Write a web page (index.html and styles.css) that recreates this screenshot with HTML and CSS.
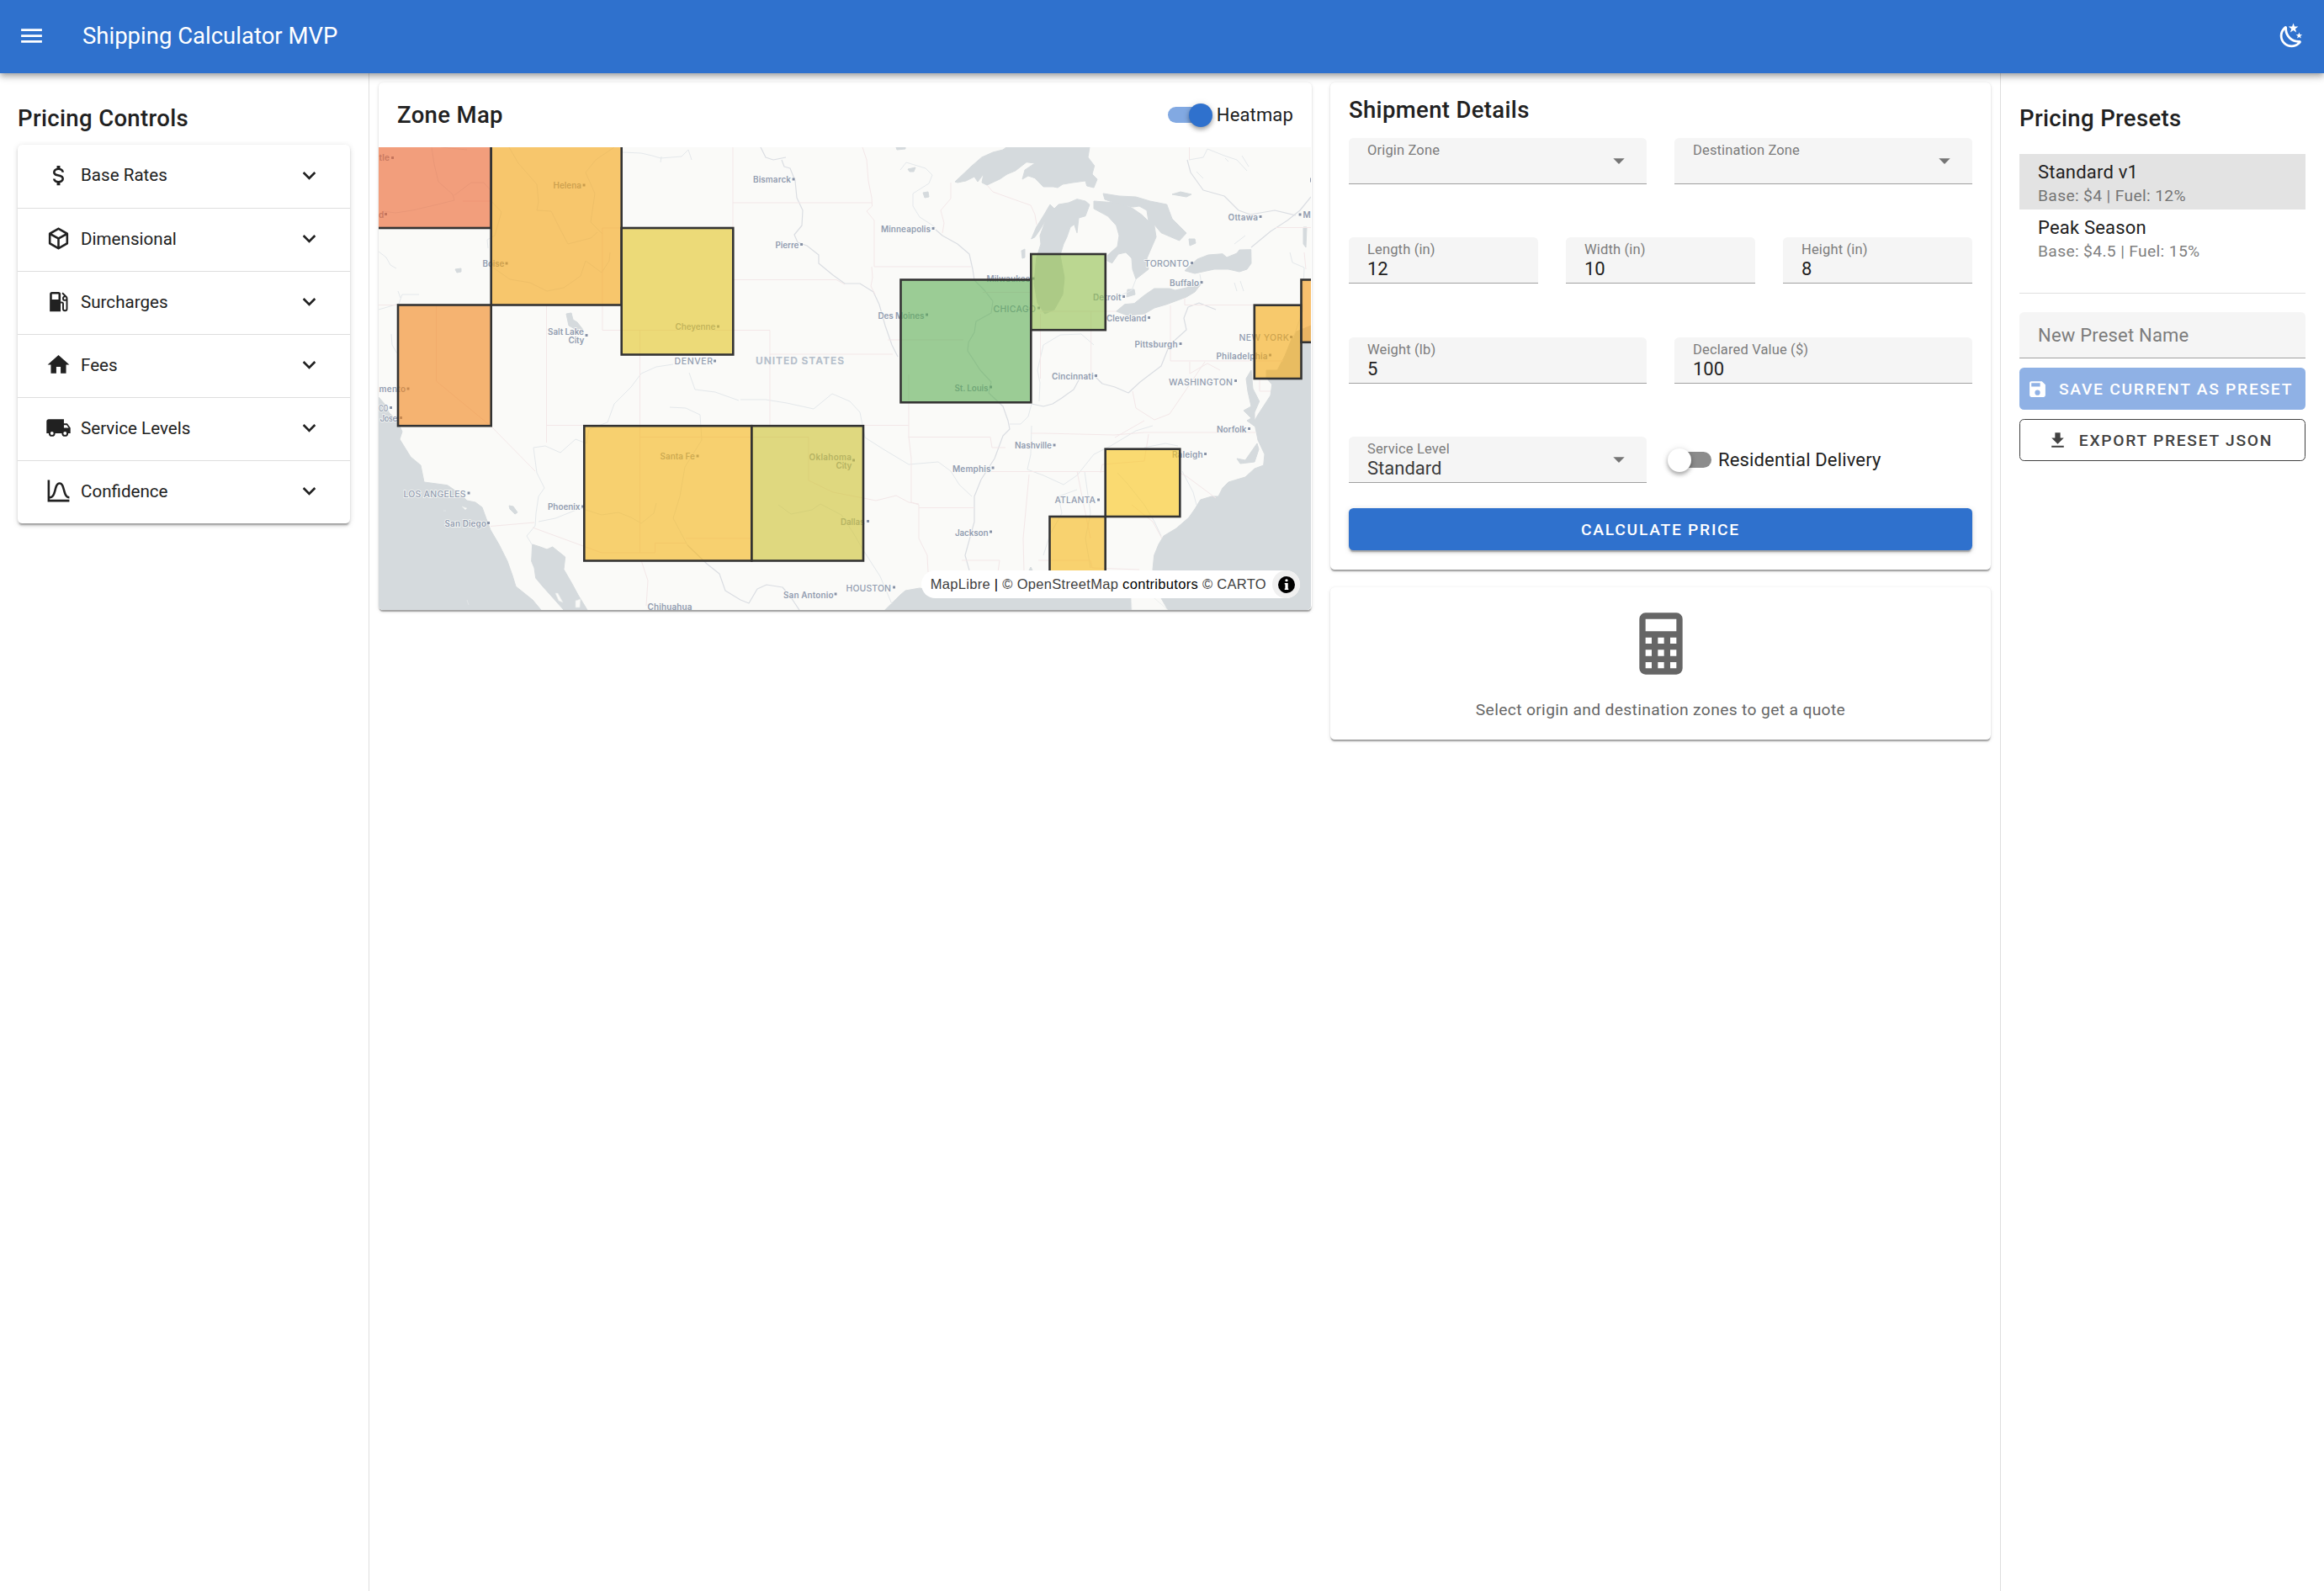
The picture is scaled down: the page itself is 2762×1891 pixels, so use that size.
FILE: index.html
```html
<!DOCTYPE html>
<html lang="en">
<head>
<meta charset="utf-8">
<title>Shipping Calculator MVP</title>
<link rel="stylesheet" href="styles.css">
</head>
<body>
<header class="app-bar">
  <svg class="icon" viewBox="0 0 24 24"><path d="M3,6H21V8H3V6M3,11H21V13H3V11M3,16H21V18H3V16Z"/></svg>
  <h1 class="app-title">Shipping Calculator MVP</h1>
  <svg class="icon" viewBox="0 0 24 24"><path d="M17.75,4.09L15.22,6.03L16.13,9.09L13.5,7.28L10.87,9.09L11.78,6.03L9.25,4.09L12.44,4L13.5,1L14.56,4L17.75,4.09M21.25,11L19.61,12.25L20.2,14.23L18.5,13.06L16.8,14.23L17.39,12.25L15.75,11L17.81,10.95L18.5,9L19.19,10.95L21.25,11M18.97,15.95C19.8,15.87 20.69,17.05 20.16,17.8C19.84,18.25 19.5,18.67 19.08,19.07C15.17,23 8.84,23 4.94,19.07C1.03,15.17 1.03,8.83 4.94,4.93C5.34,4.53 5.76,4.17 6.21,3.85C6.96,3.32 8.14,4.21 8.06,5.04C7.79,7.9 8.75,10.87 10.95,13.06C13.14,15.26 16.1,16.22 18.97,15.95M17.33,17.97C14.5,17.81 11.7,16.64 9.53,14.5C7.36,12.31 6.2,9.5 6.04,6.68C3.23,9.82 3.34,14.64 6.35,17.66C9.37,20.67 14.19,20.78 17.33,17.97Z"/></svg>
</header>
<div class="layout">
  <aside class="drawer drawer-left">
    <h2 class="heading">Pricing Controls</h2>
    <div class="panels">
      <div class="panel"><svg class="panel-icon" viewBox="0 0 24 24"><path d="M7,15H9C9,16.08 10.37,17 12,17C13.63,17 15,16.08 15,15C15,13.9 13.96,13.5 11.76,12.97C9.64,12.44 7,11.78 7,9C7,7.21 8.47,5.69 10.5,5.18V3H13.5V5.18C15.53,5.69 17,7.21 17,9H15C15,7.92 13.63,7 12,7C10.37,7 9,7.92 9,9C9,10.1 10.04,10.5 12.24,11.03C14.36,11.56 17,12.22 17,15C17,16.79 15.53,18.31 13.5,18.82V21H10.5V18.82C8.47,18.31 7,16.79 7,15Z"/></svg><span class="panel-label">Base Rates</span><svg class="panel-icon" viewBox="0 0 24 24"><path d="M7.41,8.58L12,13.17L16.59,8.58L18,10L12,16L6,10L7.41,8.58Z"/></svg></div>
      <div class="panel"><svg class="panel-icon" viewBox="0 0 24 24"><path d="M21,16.5C21,16.88 20.79,17.21 20.47,17.38L12.57,21.82C12.41,21.94 12.21,22 12,22C11.79,22 11.59,21.94 11.43,21.82L3.53,17.38C3.21,17.21 3,16.88 3,16.5V7.5C3,7.12 3.21,6.79 3.53,6.62L11.43,2.18C11.59,2.06 11.79,2 12,2C12.21,2 12.41,2.06 12.57,2.18L20.47,6.62C20.79,6.79 21,7.12 21,7.5V16.5M12,4.15L6.04,7.5L12,10.85L17.96,7.5L12,4.15M5,15.91L11,19.29V12.58L5,9.21V15.91M19,15.91V9.21L13,12.58V19.29L19,15.91Z"/></svg><span class="panel-label">Dimensional</span><svg class="panel-icon" viewBox="0 0 24 24"><path d="M7.41,8.58L12,13.17L16.59,8.58L18,10L12,16L6,10L7.41,8.58Z"/></svg></div>
      <div class="panel"><svg class="panel-icon" viewBox="0 0 24 24"><path d="M18,10A1,1 0 0,1 17,9A1,1 0 0,1 18,8A1,1 0 0,1 19,9A1,1 0 0,1 18,10M12,10H6V5H12M19.77,7.23L19.78,7.22L16.06,3.5L15,4.56L17.11,6.67C16.17,7 15.5,7.93 15.5,9A2.5,2.5 0 0,0 18,11.5C18.36,11.5 18.69,11.42 19,11.29V18.5A1,1 0 0,1 18,19.5A1,1 0 0,1 17,18.5V14A2,2 0 0,0 15,12H14V5A2,2 0 0,0 12,3H6A2,2 0 0,0 4,5V21H14V13.5H15.5V18.5A2.5,2.5 0 0,0 18,21A2.5,2.5 0 0,0 20.5,18.5V9C20.5,8.31 20.22,7.68 19.77,7.23Z"/></svg><span class="panel-label">Surcharges</span><svg class="panel-icon" viewBox="0 0 24 24"><path d="M7.41,8.58L12,13.17L16.59,8.58L18,10L12,16L6,10L7.41,8.58Z"/></svg></div>
      <div class="panel"><svg class="panel-icon" viewBox="0 0 24 24"><path d="M10,20V14H14V20H19V12H22L12,3L2,12H5V20H10Z"/></svg><span class="panel-label">Fees</span><svg class="panel-icon" viewBox="0 0 24 24"><path d="M7.41,8.58L12,13.17L16.59,8.58L18,10L12,16L6,10L7.41,8.58Z"/></svg></div>
      <div class="panel"><svg class="panel-icon" viewBox="0 0 24 24"><path d="M18,18.5A1.5,1.5 0 0,1 16.5,17A1.5,1.5 0 0,1 18,15.5A1.5,1.5 0 0,1 19.5,17A1.5,1.5 0 0,1 18,18.5M19.5,9.5L21.46,12H17V9.5M6,18.5A1.5,1.5 0 0,1 4.5,17A1.5,1.5 0 0,1 6,15.5A1.5,1.5 0 0,1 7.5,17A1.5,1.5 0 0,1 6,18.5M20,8H17V4H3C1.89,4 1,4.89 1,6V17H3A3,3 0 0,0 6,20A3,3 0 0,0 9,17H15A3,3 0 0,0 18,20A3,3 0 0,0 21,17H23V12L20,8Z"/></svg><span class="panel-label">Service Levels</span><svg class="panel-icon" viewBox="0 0 24 24"><path d="M7.41,8.58L12,13.17L16.59,8.58L18,10L12,16L6,10L7.41,8.58Z"/></svg></div>
      <div class="panel"><svg class="panel-icon" viewBox="0 0 24 24"><path d="M9.96,11.31C10.82,8.1 11.5,6 13,6C14.5,6 15.18,8.1 16.04,11.31C17,14.92 18.1,19 22,19V17C19.8,17 19,14.54 17.97,10.8C17.08,7.46 16.15,4 13,4C9.85,4 8.92,7.46 8.03,10.8C7.03,14.54 6.2,17 4,17V2H2V22H22V20H4V19C7.9,19 9,14.92 9.96,11.31Z"/></svg><span class="panel-label">Confidence</span><svg class="panel-icon" viewBox="0 0 24 24"><path d="M7.41,8.58L12,13.17L16.59,8.58L18,10L12,16L6,10L7.41,8.58Z"/></svg></div>
    </div>
  </aside>

  <main class="content">
    <section class="card map-card">
      <div class="map-head">
        <h2 class="heading">Zone Map</h2>
        <div class="switch switch-on"><span class="track"><span class="thumb"></span></span><span class="switch-label">Heatmap</span></div>
      </div>
      <div class="map">
        <svg class="map-canvas" viewBox="450 175 1108 550">
          <rect class="land" x="450" y="175" width="1108" height="550"/>
          <g class="water">
            <path d="M1135,216L1146.7,205L1154,198L1166.7,187L1180,181L1192,178L1196,175H1295L1293,187L1300.7,197L1298,207L1304,213L1300,223L1291.7,221L1290,215L1275,217L1263,219L1257,223L1251.7,222L1240,222L1230,211.7L1222,209L1215,213L1218,202L1230,194L1220,192.7L1206.7,203L1197,207L1188,213L1180,216.7L1173,220L1167,217L1169,206.7L1162,216L1158,210L1148,215L1138,217Z"/>
            <path d="M1280,236.7L1290,239L1295,243.3L1290,256.7L1282,259L1280,276.7L1276.7,266.7L1272,270L1268,281.7L1264,290L1260,303L1265,330L1263,350L1253,368L1241.7,373L1233,360L1229,336.7L1231.7,307L1237,290L1236,280L1243,261L1236,273L1230,281.7L1225.7,284L1231.7,270L1241,255L1248,243L1253,248L1258,243L1270,241Z"/>
            <path d="M1300,239L1326.7,241L1345,247L1356.7,255L1365,263L1363,250L1354,245L1346.7,246L1330,243L1313,237L1311,230L1330,233L1350,234L1366.7,239L1386.7,243L1393,260L1403,270L1410,277L1401.7,286L1390,281L1380,276.7L1371.7,266.7L1374,281.7L1363,307L1365,320L1350,331.7L1346,320L1345,307L1338,300L1329,302L1321.7,312.7L1316,310L1316.7,303L1328,293L1330,280L1326.7,268L1316.7,257L1300,248Z"/>
            <path d="M1340,344L1348,344L1349,350L1339,353Z"/>
            <path d="M1326.7,370L1336.7,361.7L1348,360.7L1360,351L1371.7,343L1390,343L1396.7,345L1410,342L1427,338L1420,347L1410,353L1386.7,361.7L1372,366L1360,373L1340,375Z"/>
            <path d="M1408,321.7L1423,308L1436,303L1453,301.7L1458,306L1470,301L1473,297L1486.7,296.7L1487,313L1482,320L1473,323L1460,320L1443,320L1420,325Z"/>
            <path d="M1413,284L1420,284L1421,289L1414,292Z"/>
            <path d="M1393,231L1403,228L1416,231L1410,234Z"/>
            <path d="M1549,270L1553,270L1552,294L1549,290Z"/>
            <path d="M1214,298L1218,296L1218,306L1215,307Z"/>
            <path d="M1065,175H1076V177L1066,178Z"/>
            <path d="M1097,229L1103,228L1104,234L1099,235Z"/>
            <path d="M1079,201L1088,199L1086,204L1081,204Z"/>
            <path d="M450,472L457,480L462,490L472,500L478,513L475,522L488,543L500,553L504,573L531.7,576.7L546.7,587L555,595L565,597L573,603L578,616.7L583,630L593,647L603,667L609,684L613,697L633,713L643,725H450Z"/>
            <path d="M632.7,647L642,650L650,653L656.7,650L671.7,662L670,676.7L680,694L687,707L698,725H670L656.7,710L645,697L636.7,687L635,675L631.7,667Z"/>
            <path d="M605,601L610,602L615,609L612,611L606,605Z"/>
            <path d="M673,373L679,372L681,380L686,383L693,392L685,392L676,387Z"/>
            <path d="M541,320L548,319L548,323L543,324Z"/>
            <path d="M1051.7,725L1070,707L1076,702L1093,699L1110,702L1345,702L1345,725Z"/>
            <path d="M1388,725L1380,711L1370,677L1371.7,660L1377,647L1383,637L1398,628L1413,615L1420,605L1426.7,594L1440,590L1448,590L1453,580L1460,573L1480,567L1491,557L1501.7,553L1503,540L1495,523L1491.7,507L1482,500L1487,497L1478,488L1487,483L1483,465L1481,450L1487,440L1489,462L1496.7,477L1491,490L1491,500L1495,493L1510,470L1511.7,457L1505,449L1505,440L1518,440L1527,423L1535,403L1541,394L1558,387V725Z"/>
            <path d="M1470,545L1480,547L1494,527L1496,534L1491,549L1474,551Z"/>
            <path d="M1222,680L1225,674L1228,680Z"/>
          </g>
          <g class="islands">
            <path d="M660,705L663,705L669,716L664,714Z"/><path d="M684,714L690,712L689,722L684,722Z"/>
            <path d="M549,602L555,604L553,606Z"/><path d="M527,607H530"/><path d="M555,713L557,719"/>
            <path d="M1344,707L1362,707L1372,711L1388,725H1345Z"/>
          </g>
          <g class="rivers">
            <path d="M450,299L459,306L464,315L471,319M450,368L474,361L478,350L498,350M473,346L476,354M465,397L466,410L472,420"/>
            <path d="M513,175L516,195L521,216L538,231L540,238L520,243L490,250L470,253L455,251M524,175L555,178M540,232L560,217L575,217L583,226M583,238L596,252L588,280L579,285L580,295M586,318L606,332L630,336L650,346L670,342L690,328L696,310L715,324L724,310L725,300"/>
            <path d="M605,175L616,194L638,219L640,240L638,250L655,251L665,271L675,290L702,283L710,276M730,175L708,190L696,205L707,230L702,264L716,278"/>
            <path d="M740,181L762,182L775,185L785,188L810,186L818,178L822,190M786,186L785,193"/>
            <path class="wide" d="M904,175L910,187L919,190L934,187M929,190L932,198L939,200L945,215L947,235L954,250L953,268L944,279L948,288L959,292L973,303L973,313L990,327L1004,337L1022,337L1038,347L1045,362L1052,387L1060,410L1067,424"/>
            <path d="M1070,202L1077,193L1100,200L1108,208L1104,218L1085,230L1085,245L1093,258L1107,267L1112,271"/>
            <path class="wide" d="M1112,273L1120,280L1138,290L1152,302L1156,320L1158,333L1170,345L1180,358L1178,372L1160,382L1158,395L1151,407L1150,417L1165,440L1178,454L1175,467L1192,483L1198,500L1200,510L1192,518L1182,545L1166,570L1158,590L1158,620L1147,660L1152,678"/>
            <path class="wide" d="M1226,480L1240,483L1251,480L1262,473L1276,463L1283,450L1300,446L1310,456L1325,460L1341,467L1355,454L1380,435L1390,410L1410,392L1407,378L1412,365L1425,360L1445,368"/>
            <path d="M1226,480L1222,495L1213,504L1200,504M1226,506L1225,540L1221,558L1240,565L1264,576L1280,565L1300,540L1320,530L1350,512L1370,506"/>
            <path d="M1235,477L1236,455L1233,440L1240,410L1260,398L1285,397L1300,410M1240,660L1248,635L1262,610L1258,590L1280,582"/>
            <path d="M880,475L910,475L935,479L967,486L989,468L1010,477L1022,490L1028,520L1050,534L1080,552L1115,549L1130,560L1140,576L1155,590"/>
            <path d="M796,484L815,485L832,493L834,523L814,555L808,590L800,616L817,648L840,670M819,443L826,463L850,466L878,476M800,433L780,436L762,444L750,460L730,480L722,502L700,510L697,527L684,522L666,538L648,530L634,532"/>
            <path d="M634,532L638,562L647,580L640,590L637,610L636,625L626,637L632,647M640,620L660,616L690,604L715,612L735,609L750,615L762,622L777,610L780,598"/>
            <path class="wide" d="M817,648L840,670L855,682L862,702L880,713L890,717L900,700L911,695L930,698L940,710L950,725"/>
            <path d="M925,600L940,611L965,606L975,599L1000,612L1015,635L1026,654L1046,685L1060,718"/>
            <path class="wide" d="M1411,190L1415,205L1430,226L1455,233L1472,250L1486,255L1515,250L1540,256M1487,294L1510,275L1530,262L1545,250L1558,234"/>
            <path d="M1413,190L1430,187L1435,177L1455,185L1470,190L1482,203M1422,204L1430,212M1456,188L1460,192M1476,185L1484,198"/>
            <path d="M1330,352L1345,345L1350,332M1426,326L1428,338M1533,300L1536,312L1550,318L1548,370L1537,402M1467,336L1470,346M1474,334L1478,346M1467,290L1480,280"/>
            <path d="M1328,562L1340,575L1360,600L1372,620L1380,637M1289,560L1296,610L1290,640L1296,675M1405,560L1418,585L1422,600M1400,530L1385,527L1360,532"/>
          </g>
          <g class="borders">
            <path d="M871,175V271M871,241H1036.5M871,332.5H994L1004,338M716,271H740M716,271V392.5M450,362.5H716M649.5,362.5V526M716,392.5H915V421H1061M760.5,392.5V657M649.5,505.5H1080M915,421V505.5"/>
            <path d="M1025,175L1030,190L1032,215L1036,235L1036.5,245L1030,251L1039,262V317H1154M1036,317L1037,330L1035,340L1040,350M1055,404H1145M1168,347.5H1225M1080,445V519L1083,545V597L1092,600V640L1102,660L1103,680M1092,603.5H1158"/>
            <path d="M550,239H583M518.5,362.5V453L584,507L636,560M961,519.5V571L990,585L1026,592L1041,595L1065,589L1080,597L1092,599"/>
            <path d="M583,625.5L635,621M633,627L715,657H778.5V645.5H815M815,640H893M761,519.5H961"/>
            <path d="M1130,217V236L1118,250L1122,265L1120,277M1173,220L1180,228L1205,237L1225,244L1230,255L1232,267"/>
            <path d="M1079.5,519.5H1177L1179,532H1195M1177,560.5H1313M1225,515H1240L1324,517L1360,514H1492M1223,564L1216,640L1217,680M1280,560L1296,640M1308,562L1310,552L1360,548L1365,516"/>
            <path d="M1236.5,373V450M1236,370H1296.7M1296.7,370V445M1296.7,370L1326,370M1391,363V429H1525M1408,354V362.5H1540M1414,430V444L1435,432L1450,440M1346,465L1350,485L1372,499L1390,492L1405,470L1432,430"/>
            <path d="M1413.5,175V190M1516,270.5H1558M1550,300L1552,320M1402,562L1410,566L1445,592M1345,600L1370,620L1381,640M1143,666H1188L1186,680M1234,666H1296L1298,675L1354,677M762,666L770,690L768,720M1497,450V465H1510M1325,520L1360,500"/>
          </g>
          <g class="dots">
            <path d="M466.5,187.5h.1M458.5,254.5h.1M694,220h.1M602,313h.1M697,398.500h.1M853.500,388h.1M943,213h.1M1109,271.500h.1M952.500,290.500h.1M1228,331h.1M1234.500,366h.1M1101.500,374h.1M1416.500,312.500h.1M1428,335.500h.1M1335.500,352.500h.1M1365.500,377.500h.1M1403,408.500h.1M1534.500,400.500h.1M1509.500,422h.1M1498,257.500h.1M1545,255h.1M1468.500,452.500h.1M1302.500,446.500h.1M1484.500,509.500h.1M1253,529h.1M1432.500,539.500h.1M1305.500,594h.1M1180,556h.1M1177.500,632h.1M1177.500,460h.1M1014.500,547h.1M1031.500,619.500h.1M1062.500,698h.1M993,706h.1M849.500,429h.1M485,462h.1M464.500,484.500h.1M476.500,496.500h.1M557,586h.1M580.500,621.500h.1M692.500,602h.1M829,542h.1M1558.500,213v2"/>
          </g>
          <g class="city">
            <text x="450.500" y="191" textLength="12.500">tle</text>
            <text x="450" y="258.500" textLength="5.500">d</text>
            <text x="657.500" y="224" textLength="33.500">Helena</text>
            <text x="573.500" y="317" textLength="26">Boise</text>
            <text x="651" y="398" textLength="43">Salt Lake</text>
            <text x="675.500" y="407.500" textLength="19">City</text>
            <text x="802.500" y="392" textLength="48">Cheyenne</text>
            <text x="895" y="217" textLength="45">Bismarck</text>
            <text x="1047" y="276" textLength="59">Minneapolis</text>
            <text x="921.500" y="294.500" textLength="28">Pierre</text>
            <text x="1172.500" y="335" textLength="52">Milwaukee</text>
            <text x="1043.500" y="378.500" textLength="55">Des Moines</text>
            <text x="1390" y="339.500" textLength="35">Buffalo</text>
            <text x="1299" y="356.500" textLength="33.500">Detroit</text>
            <text x="1315" y="381.500" textLength="47.500">Cleveland</text>
            <text x="1348.500" y="412.500" textLength="51">Pittsburgh</text>
            <text x="1445.500" y="426.500" textLength="61">Philadelphia</text>
            <text x="1459.500" y="262" textLength="35.500">Ottawa</text>
            <text x="1548.500" y="259">M</text>
            <text x="1250" y="451" textLength="49.500">Cincinnati</text>
            <text x="1446" y="513.500" textLength="35.500">Norfolk</text>
            <text x="1206" y="533" textLength="44">Nashville</text>
            <text x="1393" y="543.500" textLength="36.500">Raleigh</text>
            <text x="1132" y="560.500" textLength="45.500">Memphis</text>
            <text x="1135" y="636.500" textLength="39.500">Jackson</text>
            <text x="1134.500" y="464.500" textLength="40">St. Louis</text>
            <text x="961.500" y="547" textLength="50.500">Oklahoma</text>
            <text x="993.500" y="557" textLength="19">City</text>
            <text x="999" y="623.500" textLength="28.500">Dallas</text>
            <text x="931" y="710.500" textLength="59.500">San Antonio</text>
            <text x="450.500" y="466" textLength="31.500">mento</text>
            <text x="451.500" y="501" textLength="21">Jose</text>
            <text x="528.500" y="625.500" textLength="49.500">San Diego</text>
            <text x="651" y="606" textLength="38.500">Phoenix</text>
            <text x="784.500" y="546" textLength="41.500">Santa Fe</text>
            <text x="769.500" y="725" textLength="53">Chihuahua</text>
          </g>
          <g class="city metro">
            <text x="1180.500" y="370.500" textLength="50.500">CHICAGO</text>
            <text x="1360" y="317" textLength="53">TORONTO</text>
            <text x="1472.500" y="405" textLength="59.500">NEW YORK</text>
            <text x="1389" y="457.500" textLength="76">WASHINGTON</text>
            <text x="1253.500" y="598" textLength="48.500">ATLANTA</text>
            <text x="1005.500" y="702.500" textLength="53.500">HOUSTON</text>
            <text x="801.500" y="432.500" textLength="45.500">DENVER</text>
            <text x="450" y="488.500" textLength="11.500" lengthAdjust="spacingAndGlyphs">CO</text>
            <text x="479.500" y="590.500" textLength="74">LOS ANGELES</text>
          </g>
          <text class="country" x="898" y="432.500" textLength="105">UNITED STATES</text>
          <g class="zones">
            <rect x="440" y="160" width="143.700" height="111" fill="#ed6129"/>
            <rect x="583.700" y="160" width="155" height="202.500" fill="#f5a30f"/>
            <rect x="738.700" y="271" width="132.600" height="150.500" fill="#e3c523"/>
            <rect x="473" y="362.500" width="110.700" height="143.700" fill="#f28417"/>
            <rect x="694.300" y="506.200" width="199" height="160.300" fill="#f5b414"/>
            <rect x="893.300" y="506.200" width="132.700" height="160.300" fill="#cdc12e"/>
            <rect x="1070.500" y="332.500" width="154.800" height="145.800" fill="#5cad53"/>
            <rect x="1225.300" y="302" width="88.500" height="90.200" fill="#91c04c"/>
            <rect x="1490.800" y="362.700" width="55.700" height="87.300" fill="#f5a80f"/>
            <rect x="1546.500" y="332.500" width="40" height="74.300" fill="#f79912"/>
            <rect x="1313.700" y="533.700" width="88.600" height="80.300" fill="#fac517"/>
            <rect x="1247.500" y="614" width="66.200" height="85" fill="#f7b714"/>
          </g>
        </svg>
        <div class="attribution">
          <span class="credit"><a>MapLibre</a> | <a>© OpenStreetMap</a> contributors <a>© CARTO</a></span>
          <span class="info"><svg class="info-icon" viewBox="0 0 20 20"><circle cx="10" cy="10" r="10"/><path fill="#fff" d="M8.300,4.800a1.700,1.500 0 1,1 3.400,0a1.700,1.500 0 1,1 -3.400,0M7.700,8h4v6.500h.6v1.500h-4.600v-1.500h.7v-5h-.7z"/></svg></span>
        </div>
      </div>
    </section>

    <div class="quote-column">
      <section class="card form-card">
        <h2 class="heading">Shipment Details</h2>
        <div class="form-row two">
          <div class="field"><div class="field-text"><span class="label">Origin Zone</span></div><svg class="caret" viewBox="0 0 24 24"><path d="M7,10L12,15L17,10H7Z"/></svg></div>
          <div class="field"><div class="field-text"><span class="label">Destination Zone</span></div><svg class="caret" viewBox="0 0 24 24"><path d="M7,10L12,15L17,10H7Z"/></svg></div>
        </div>
        <div class="form-row three">
          <div class="field"><div class="field-text"><span class="label">Length (in)</span><span class="value">12</span></div></div>
          <div class="field"><div class="field-text"><span class="label">Width (in)</span><span class="value">10</span></div></div>
          <div class="field"><div class="field-text"><span class="label">Height (in)</span><span class="value">8</span></div></div>
        </div>
        <div class="form-row two">
          <div class="field"><div class="field-text"><span class="label">Weight (lb)</span><span class="value">5</span></div></div>
          <div class="field"><div class="field-text"><span class="label">Declared Value ($)</span><span class="value">100</span></div></div>
        </div>
        <div class="form-row two last">
          <div class="field"><div class="field-text"><span class="label">Service Level</span><span class="value selected">Standard</span></div><svg class="caret" viewBox="0 0 24 24"><path d="M7,10L12,15L17,10H7Z"/></svg></div>
          <div class="switch"><span class="track"><span class="thumb"></span></span><span class="switch-label">Residential Delivery</span></div>
        </div>
        <div class="button primary">CALCULATE PRICE</div>
      </section>
      <section class="card empty-card">
        <svg class="empty-icon" viewBox="0 0 24 24"><path d="M7,2H17A2,2 0 0,1 19,4V20A2,2 0 0,1 17,22H7A2,2 0 0,1 5,20V4A2,2 0 0,1 7,2M7,4V8H17V4H7M7,10V12H9V10H7M11,10V12H13V10H11M15,10V12H17V10H15M7,14V16H9V14H7M11,14V16H13V14H11M15,14V16H17V14H15M7,18V20H9V18H7M11,18V20H13V18H11M15,18V20H17V18H15Z"/></svg>
        <p class="empty-text">Select origin and destination zones to get a quote</p>
      </section>
    </div>
  </main>

  <aside class="drawer drawer-right">
    <h2 class="heading">Pricing Presets</h2>
    <div class="presets">
      <div class="preset active"><span class="preset-name">Standard v1</span><span class="preset-info">Base: $4 | Fuel: 12%</span></div>
      <div class="preset"><span class="preset-name">Peak Season</span><span class="preset-info">Base: $4.5 | Fuel: 15%</span></div>
    </div>
    <div class="divider"></div>
    <div class="field new-preset"><span class="placeholder">New Preset Name</span></div>
    <div class="button save"><svg class="button-icon" viewBox="0 0 24 24"><path d="M15,9H5V5H15M12,19A3,3 0 0,1 9,16A3,3 0 0,1 12,13A3,3 0 0,1 15,16A3,3 0 0,1 12,19M17,3H5C3.89,3 3,3.900 3,5V19A2,2 0 0,0 5,21H19A2,2 0 0,0 21,19V7L17,3Z"/></svg><span>SAVE CURRENT AS PRESET</span></div>
    <div class="button outlined"><svg class="button-icon" viewBox="0 0 24 24"><path d="M5,20H19V18H5M19,9H15V3H9V9H5L12,16L19,9Z"/></svg><span>EXPORT PRESET JSON</span></div>
  </aside>
</div>
</body>
</html>
```

FILE: styles.css
```css
* { box-sizing: border-box; }
body { margin: 0; height: 1891px; overflow: hidden; display: flex; flex-direction: column; background: #fff; color: #212121; font-family: Roboto, sans-serif; font-size: 22px; }
h1, h2, p { margin: 0; }
svg { display: block; fill: currentColor; flex: none; }

.app-bar { height: 87px; flex: none; display: flex; align-items: center; padding: 0 22px 2px 21px; background: #2f71cd; color: #fff; position: relative; z-index: 2; box-shadow: 0 3px 5.500px -1px rgba(0,0,0,.2), 0 5.500px 7px rgba(0,0,0,.14), 0 1px 14px rgba(0,0,0,.12); }
.icon { width: 33px; height: 33px; }
.app-title { flex: 1; margin-left: 44px; font-size: 27.500px; font-weight: 400; line-height: 36px; }
.heading { font-size: 27.500px; font-weight: 500; line-height: 44px; letter-spacing: .344px; white-space: nowrap; }

.layout { flex: 1; display: flex; }
.drawer { flex: none; padding: 32px 22px 0 21px; }
.drawer-left { width: 439px; border-right: 1px solid #dedede; }
.drawer-right { width: 385px; border-left: 1px solid #dedede; padding-left: 22px; }

.panels { margin-top: 9px; border-radius: 5.500px; background: #fff; box-shadow: 0 4px 1.400px -2.750px rgba(0,0,0,.2), 0 2.750px 2.750px rgba(0,0,0,.14), 0 1.400px 7px rgba(0,0,0,.12); }
.panel { height: 75px; display: flex; align-items: center; padding: 0 33px 3px; }
.panel + .panel { border-top: 1px solid #dedede; }
.panel-icon { width: 31px; height: 31px; }
.panel-label { flex: 1; margin-left: 11px; font-size: 20.600px; }

.content { flex: 1; display: flex; align-items: flex-start; gap: 22px; padding: 11px; }
.card { background: #fff; border-radius: 5.500px; box-shadow: 0 2.750px 1.400px -1.400px rgba(0,0,0,.2), 0 1.400px 1.400px rgba(0,0,0,.14), 0 1.400px 4px rgba(0,0,0,.12); }
.map-card { width: 1109px; padding-right: 1px; }
.map-head { height: 77px; display: flex; align-items: center; justify-content: space-between; padding: 0 21px 0 22px; }
.map { height: 550px; position: relative; overflow: hidden; border-radius: 0 0 5px 5px; }
.map-canvas { width: 1108px; height: 550px; }
.land { fill: #fafaf8; }
.water { fill: #d5dadd; stroke: #d5dadd; stroke-width: 1; stroke-linejoin: round; }
.islands { fill: #fafaf8; stroke: #e6e9ea; stroke-width: .700; }
.rivers { fill: none; stroke: #e4e8eb; stroke-width: 1; stroke-linejoin: round; }
.wide { stroke: #dadde2; stroke-width: 1.200; }
.borders { fill: none; stroke: #f3e7e8; stroke-width: 1; }
.dots { stroke: #8590a5; stroke-width: 2.800; stroke-linecap: square; }
.city { font: 600 10px Inter, sans-serif; fill: #929db0; stroke: #fafaf8; stroke-width: 1.500; paint-order: stroke; }
.metro { font-size: 10.500px; font-weight: 500; }
.country { font: 700 12px Inter, sans-serif; fill: #b5bfcb; }
.zones { stroke: #333; stroke-width: 2.600; fill-opacity: .6; }

.attribution { position: absolute; right: 13px; bottom: 14px; height: 33px; display: flex; align-items: center; background: #fff; border-radius: 16.500px; font: 16.500px "Liberation Sans", Arial, sans-serif; color: #000; padding-left: 11px; white-space: nowrap; }
.credit { letter-spacing: .31px; margin-right: 7px; }
.credit a { color: #404040; }
.info { width: 33px; height: 33px; display: flex; align-items: center; justify-content: center; border-radius: 50%; background: #f0f0f0; color: #000; }
.info-icon { width: 20px; height: 20px; }

.switch { display: flex; align-items: center; }
.track { width: 46px; height: 19px; border-radius: 10px; background: #8c8c8c; position: relative; margin-right: 8px; }
.thumb { position: absolute; top: -4.500px; left: -6.500px; width: 28px; height: 28px; border-radius: 50%; background: #fff; box-shadow: 0 3px 5px rgba(0,0,0,.3), 0 1px 9px rgba(0,0,0,.12); }
.switch-on .track { margin-right: 12px; background: #82a9e2; }
.switch-on .thumb { left: auto; right: -7px; background: #2f71cd; }
.switch-label { letter-spacing: .15px; line-height: 30px; }

.quote-column { width: 785px; display: flex; flex-direction: column; gap: 21px; }
.form-card { height: 579px; padding: 11px 22px 0; }
.form-row { display: grid; column-gap: 33px; margin-bottom: 63px; }
.heading + .form-row { margin-top: 11px; }
.two { grid-template-columns: 1fr 1fr; }
.three { grid-template-columns: 1fr 1fr 1fr; margin-bottom: 64px; }
.last { margin-bottom: 30px; }
.last .switch { margin-left: -2px; }
.field { height: 55px; display: flex; justify-content: space-between; padding: 0 17px 0 22px; background: #f5f5f5; border-bottom: 1px solid #a0a0a0; border-radius: 5.500px 5.500px 0 0; }
.field-text { display: flex; flex-direction: column; }
.label { margin-top: 5px; font-size: 16.500px; line-height: 20px; letter-spacing: .150px; color: #7c7c7c; white-space: nowrap; }
.value { line-height: 26px; }
.selected { color: #3b3b3b; }
.caret { width: 32px; height: 32px; margin-top: 11px; color: #757575; }
.button { height: 50px; display: flex; align-items: center; justify-content: center; border-radius: 5.500px; font-size: 19.250px; font-weight: 500; letter-spacing: 1.720px; white-space: nowrap; }
.primary { background: #2f71cd; color: #fff; box-shadow: 0 4px 1.400px -2.750px rgba(0,0,0,.2), 0 2.750px 2.750px rgba(0,0,0,.14), 0 1.400px 7px rgba(0,0,0,.12); }
.empty-card { height: 181px; display: flex; flex-direction: column; align-items: center; padding-top: 23px; color: #666; }
.empty-icon { width: 88px; height: 88px; }
.empty-text { margin-top: 21px; font-size: 19.250px; line-height: 28px; letter-spacing: .344px; }

.presets { margin-top: 20px; }
.preset { height: 66px; display: flex; flex-direction: column; padding: 6px 22px 0; }
.active { background: #e3e3e3; }
.preset-name { line-height: 32px; letter-spacing: .2px; }
.preset-info { font-size: 19.250px; line-height: 24px; letter-spacing: .344px; color: #808080; }
.active .preset-info { color: #757575; }
.divider { margin: 33px 0 22px; height: 1px; background: #e0e0e0; }
.new-preset { align-items: center; padding-top: 1px; }
.placeholder { color: #7c7c7c; letter-spacing: .2px; }
.button-icon { width: 25px; height: 25px; margin-right: 13px; }
.save { margin-top: 11px; padding-right: 6px; background: #8fb1e5; color: #fff; }
.outlined { margin-top: 11px; padding-right: 6px; border: 1px solid #404040; color: #424242; }
```
